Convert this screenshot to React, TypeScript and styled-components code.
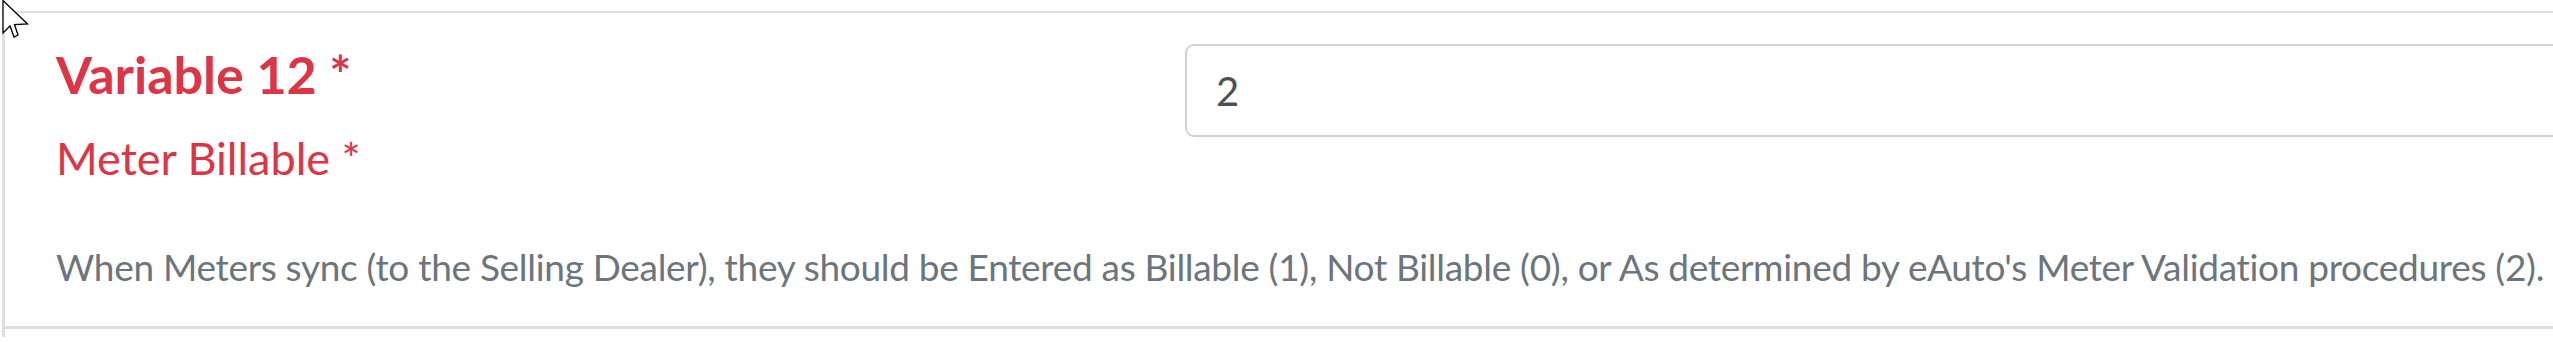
import React from "react";
import styled, { createGlobalStyle } from "styled-components";

const GlobalStyle = createGlobalStyle`
  html, body {
    margin: 0;
    padding: 0;
    background: #ffffff;
    overflow: hidden;
  }
  body {
    font-family: Lato, "Open Sans", "Noto Sans", sans-serif;
    font-variant-ligatures: none;
  }
`;

const Page = styled.div`
  position: relative;
  width: 2700px;
  padding: 11px 0 0 2px;
  box-sizing: border-box;
`;

const Card = styled.div`
  border-top: 2px solid #dedede;
  border-left: 3px solid #dedede;
  padding-bottom: 8px;
`;

const Item = styled.div`
  border-bottom: 3px solid #dedede;
  padding: 30px 0 37px 51px;
`;

const Row = styled.div`
  display: flex;
  align-items: flex-start;
`;

const LabelCol = styled.div`
  flex: 0 0 1129px;
  display: flex;
  flex-direction: column;
  gap: 26px;
`;

const Title = styled.div`
  font-size: 52px;
  line-height: 62px;
  font-weight: 700;
  color: #dc3545;
`;

const Label = styled.div`
  font-size: 45px;
  line-height: 54px;
  font-weight: 400;
  color: #dc3545;
`;

const InputCol = styled.div`
  flex: 1;
  padding-top: 1px;
`;

const Input = styled.input`
  display: block;
  width: 100%;
  height: 93px;
  box-sizing: border-box;
  border: 2px solid #ced4da;
  border-radius: 9px;
  padding: 0 29px;
  font-family: Lato, "Open Sans", sans-serif;
  font-size: 40px;
  color: #495057;
  background: #ffffff;
  outline: none;
`;

const Description = styled.div`
  margin-top: 60px;
  font-size: 37px;
  line-height: 44px;
  letter-spacing: -0.3px;
  color: #6c757d;
  white-space: nowrap;
`;

const Cursor = styled.svg`
  position: absolute;
  left: 2px;
  top: 0;
  width: 30px;
  height: 40px;
  pointer-events: none;
`;

export default function App() {
  return (
    <>
      <GlobalStyle />
      <Page>
        <Card>
          <Item>
            <Row>
              <LabelCol>
                <Title>Variable 12 *</Title>
                <Label>Meter Billable *</Label>
              </LabelCol>
              <InputCol>
                <Input defaultValue="2" />
              </InputCol>
            </Row>
            <Description>
              When Meters sync (to the Selling Dealer), they should be Entered as Billable (1), Not Billable (0), or As determined by eAuto's Meter Validation procedures (2).
            </Description>
          </Item>
        </Card>
        <Cursor viewBox="0 0 30 40">
          <path
            d="M1 0.5 L1 33 L8 26 L12 37 L16 35 L12.5 24.5 L25.5 24 Z"
            fill="#ffffff"
            stroke="#000000"
            strokeWidth="1.3"
            strokeLinejoin="miter"
          />
        </Cursor>
      </Page>
    </>
  );
}
